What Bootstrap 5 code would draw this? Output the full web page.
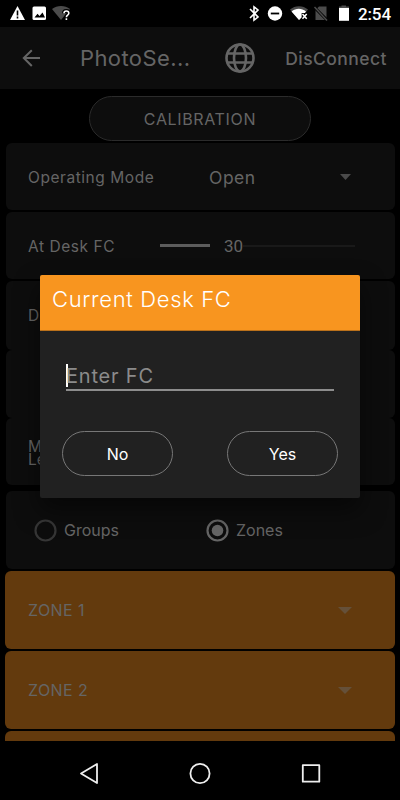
<!DOCTYPE html>
<html lang="en">
<head>
<meta charset="utf-8">
<meta name="viewport" content="width=device-width, initial-scale=1">
<title>PhotoSensor</title>
<link href="https://cdn.jsdelivr.net/npm/bootstrap@5.3.0/dist/css/bootstrap.min.css" rel="stylesheet">
<style>
  body { background: #000; color: #656565; font-family: Inter, "Liberation Sans", sans-serif; font-size: 15.5px; line-height: 1.2; height: 800px; }
  svg { display: block; flex: none; }
  .status-bar { height: 27px; padding: 0 9px 0 8px; color: #fff; }
  .clock { font: 500 17px/20px Roboto, sans-serif; letter-spacing: -.1px; padding-top: 1px; }
  .app-bar { height: 62px; background: #0d0d0d; padding: 0 13px 0 20px; }
  .app-title { font-size: 22px; width: 120px; margin-left: 36px; letter-spacing: .4px; }
  .app-action { font-size: 17.5px; letter-spacing: .45px; }
  .calibrate { width: 222px; height: 45px; margin: 7px auto 2px; border: 1px solid #2b2b2b; background: #0d0d0d; font-size: 16px; color: #656565; letter-spacing: .65px; }
  .panel { height: 67px; margin: 0 5px 2px 6px; padding: 0 40px 0 22px; border-radius: 6px; background: #0d0d0d; }
  .panel.joined { height: 68.5px; margin-bottom: 0; }
  .panel.tall { height: 78px; margin-top: 4px; padding-left: 28px; }
  .panel.zone { height: 78px; margin-left: 5px; padding: 0 43px 0 23px; background: #633a0d; font-size: 16px; letter-spacing: .4px; }
  .field-label { padding-top: 3px; letter-spacing: .55px; }
  .label-col { width: 181px; }
  .desk-col { width: 132px; }
  .open-mode { font-size: 17.5px; letter-spacing: .5px; padding-top: 1px; }
  .mode-arrow { margin-right: 3px; }
  .min-level { line-height: 13.5px; padding-top: 3px; }
  .track-on { width: 50px; height: 3px; background: #5c5c5c; }
  .track-off { height: 2px; background: #191919; }
  .level { font: 400 17px/20px Roboto, sans-serif; margin-left: 14px; }
  .pick-group { width: 172px; }
  .pick-text { font-size: 16px; margin-left: 7px; padding-top: 2px; }
  .zone-name { padding-top: 2px; }
  .scroll-area { height: 652px; }
  .nav-keys { height: 59px; }
  .dialog-box { top: 275px; left: 40px; width: 320px; height: 223px; background: #212121; border-radius: 2px; box-shadow: 0 12px 24px rgba(0,0,0,.5); }
  .dialog-title { height: 56px; padding: 11px 11px 0 12px; background: #f8951f; border-bottom: 1px solid #bb711b; color: #fff; font-size: 22px; letter-spacing: .65px; border-radius: 2px 2px 0 0; }
  .entry { margin: 31px 26px 0; height: 29px; border-bottom: 2px solid #8d8d8d; font-size: 20px; letter-spacing: .8px; color: #8b8b8b; }
  .caret { width: 2px; height: 23px; background: #fff; margin-right: -2px; }
  .dialog-actions { padding: 40px 22px 0; }
  .pill { width: 111px; height: 45px; border: 1px solid #777; color: #fff; font-size: 16px; }
</style>
<script src="https://cdn.jsdelivr.net/npm/bootstrap@5.3.0/dist/js/bootstrap.bundle.min.js"></script>
</head>
<body class="position-relative overflow-hidden d-flex flex-column">

<div class="status-bar d-flex align-items-center justify-content-between">
  <svg width="66" height="27" viewBox="0 0 66 27">
    <path d="M9.500 6 17 20H2z" fill="#fff"/><path d="M9.500 10.500v5M9.500 16.500v2" stroke="#000" stroke-width="1.600"/>
    <rect x="24.500" y="6.500" width="13.500" height="13.500" rx="1.500" fill="#fff"/><path d="M26.500 17.500l3-3.700 2 2.200 3-3.500 2.500 5z" fill="#000"/>
    <path d="M44 9c5-4 13-4 18 0l-9 11z" fill="#4b4b4b"/>
    <path d="M56 13.200c0-3 4.800-3 4.800 0 0 2-2.400 1.900-2.400 4M58.400 18.200v1.800" fill="none" stroke="#000" stroke-width="4"/>
    <path d="M56 13.200c0-3 4.800-3 4.800 0 0 2-2.400 1.900-2.400 4M58.400 18.200v1.800" fill="none" stroke="#fff" stroke-width="1.600"/>
  </svg>
  <div class="d-flex align-items-center">
    <svg width="112" height="27" viewBox="247 0 112 27">
      <path d="M251 9l8 8-4 3.200V6.800l4 3.200-8 8" fill="none" stroke="#fff" stroke-width="1.600"/>
      <circle cx="276" cy="13.500" r="7.200" fill="#fff"/><path d="M271.800 13.500h8.400" stroke="#000" stroke-width="1.800"/>
      <path d="M291 9.500c5-4.500 13-4.500 18 0l-2 2.500h-4v5l-3 3z" fill="#4b4b4b"/>
      <path d="M292.500 11.400c4.500-3.500 10-3.500 14.500 0l-1 1.600h-3.500v4.500L300 20z" fill="#fff"/>
      <path d="M303.500 14l4.200 4.800m0-4.800l-4.200 4.800" stroke="#fff" stroke-width="1.500"/>
      <path d="M320 6.500h7.500V20h-11V10z" fill="#4b4b4b"/><path d="M315.500 7.500l13 13" stroke="#000" stroke-width="3"/><path d="M315.500 7l12.500 13.500" stroke="#4b4b4b" stroke-width="1.500"/>
      <path d="M340 8v-1.500h2.500V5.500h4.500v1H350V8z" fill="#4b4b4b"/><path d="M340 8h10v12.800h-10z" fill="#fff"/>
    </svg>
    <span class="clock">2:54</span>
  </div>
</div>

<header class="app-bar d-flex align-items-center">
  <svg width="24" height="24" viewBox="0 0 24 24"><path d="M20 12H4M11.800 4.200 3.800 12l8 8" fill="none" stroke="#656565" stroke-width="2"/></svg>
  <div class="app-title text-nowrap">PhotoSe...</div>
  <svg class="ms-4" width="32" height="30" viewBox="-1 0 32 30" fill="none" stroke="#656565" stroke-width="2.600">
    <circle cx="15" cy="15" r="13.500"/><ellipse cx="15" cy="15" rx="6" ry="13.500"/><path d="M3 10.500h24M3 19.500h24"/>
  </svg>
  <div class="app-action ms-auto fw-medium">DisConnect</div>
</header>

<main class="scroll-area overflow-hidden d-flex flex-column">
  <button class="calibrate btn rounded-pill p-0 flex-shrink-0">CALIBRATION</button>
  <section class="panel d-flex align-items-center flex-shrink-0">
    <div class="field-label label-col">Operating Mode</div>
    <div class="open-mode">Open</div>
    <svg class="mode-arrow ms-auto" width="12" height="6"><path d="M0 0h11L5.500 6z" fill="#4a4a4a"/></svg>
  </section>
  <section class="panel d-flex align-items-center flex-shrink-0">
    <div class="field-label desk-col">At Desk FC</div>
    <div class="track-on"></div>
    <div class="level">30</div>
    <div class="track-off flex-grow-1"></div>
  </section>
  <section class="panel joined d-flex align-items-center flex-shrink-0"><div class="field-label">D</div></section>
  <section class="panel joined flex-shrink-0"></section>
  <section class="panel d-flex align-items-center flex-shrink-0"><div class="min-level">M<br>Le</div></section>
  <section class="panel tall d-flex align-items-center flex-shrink-0">
    <div class="pick-group d-flex align-items-center">
      <svg width="23" height="23"><circle cx="11.500" cy="11.500" r="10" fill="none" stroke="#363636" stroke-width="2.200"/></svg>
      <span class="pick-text">Groups</span>
    </div>
    <div class="d-flex align-items-center">
      <svg width="23" height="23"><circle cx="11.500" cy="11.500" r="10" fill="none" stroke="#656565" stroke-width="2.200"/><circle cx="11.500" cy="11.500" r="5.800" fill="#656565"/></svg>
      <span class="pick-text">Zones</span>
    </div>
  </section>
  <section class="panel zone d-flex align-items-center flex-shrink-0"><div class="zone-name">ZONE 1</div><svg class="ms-auto" width="14" height="7"><path d="M0 0h14L7 7z" fill="#655039"/></svg></section>
  <section class="panel zone d-flex align-items-center flex-shrink-0"><div class="zone-name">ZONE 2</div><svg class="ms-auto" width="14" height="7"><path d="M0 0h14L7 7z" fill="#655039"/></svg></section>
  <section class="panel zone flex-shrink-0"></section>
</main>

<nav class="nav-keys d-flex justify-content-center align-items-center">
  <svg width="400" height="59" viewBox="0 741 400 59" fill="none" stroke="#eee" stroke-width="1.800" stroke-linejoin="round">
    <path d="M97 764v19l-16-9.500z"/><circle cx="200" cy="773.500" r="9.600"/><rect x="302.800" y="765.200" width="16.500" height="16.500"/>
  </svg>
</nav>

<div class="dialog-box position-absolute" role="dialog">
  <div class="dialog-title fw-light">Current Desk FC</div>
  <div class="entry d-flex align-items-center"><span class="caret"></span><span>Enter FC</span></div>
  <div class="dialog-actions d-flex justify-content-between">
    <button class="pill btn rounded-pill p-0">No</button>
    <button class="pill btn rounded-pill p-0">Yes</button>
  </div>
</div>
</body>
</html>
